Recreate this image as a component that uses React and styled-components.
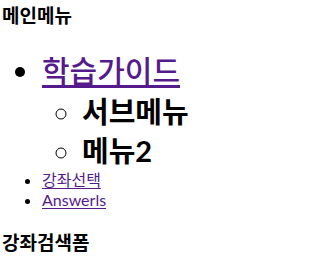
import React from "react";
import styled, { createGlobalStyle } from "styled-components";

const GlobalStyle = createGlobalStyle`
  body {
    margin: 0;
    background: #ffffff;
    color: #000000;
    font-family: Lato, "Noto Sans CJK KR", sans-serif;
  }
`;

const Page = styled.div`
  padding: 2px 2px 0;
`;

const SectionTitle = styled.h3`
  margin: 0;
  font-size: 19px;
  line-height: 27px;
  font-weight: 700;
`;

const MenuList = styled.ul`
  margin: ${(p) => (p.$nested ? "0" : "19px 0")};
  padding-left: 40px;
  list-style: ${(p) => (p.$nested ? "circle" : "disc")};
`;

const MenuItem = styled.li`
  font-size: ${(p) => p.$size || 16}px;
  line-height: ${(p) => p.$lh || 20}px;
  font-weight: ${(p) => p.$weight || 400};
`;

const MenuLink = styled.a`
  color: #551a8b;
  text-decoration: underline;
  text-underline-offset: ${(p) => (p.$big ? "3px" : "2px")};
  font-weight: ${(p) => (p.$big ? 500 : 400)};
`;

export default function App() {
  return (
    <>
      <GlobalStyle />
      <Page>
        <SectionTitle>메인메뉴</SectionTitle>
        <MenuList>
          <MenuItem $size={30} $lh={44}>
            <MenuLink href="#guide" $big>
              학습가이드
            </MenuLink>
            <MenuList $nested>
              <MenuItem $size={29} $lh={39} $weight={700}>
                서브메뉴
              </MenuItem>
              <MenuItem $size={29} $lh={39} $weight={700}>
                메뉴2
              </MenuItem>
            </MenuList>
          </MenuItem>
          <MenuItem>
            <MenuLink href="#course">강좌선택</MenuLink>
          </MenuItem>
          <MenuItem>
            <MenuLink href="#answers">Answerls</MenuLink>
          </MenuItem>
        </MenuList>
        <SectionTitle>강좌검색폼</SectionTitle>
      </Page>
    </>
  );
}
